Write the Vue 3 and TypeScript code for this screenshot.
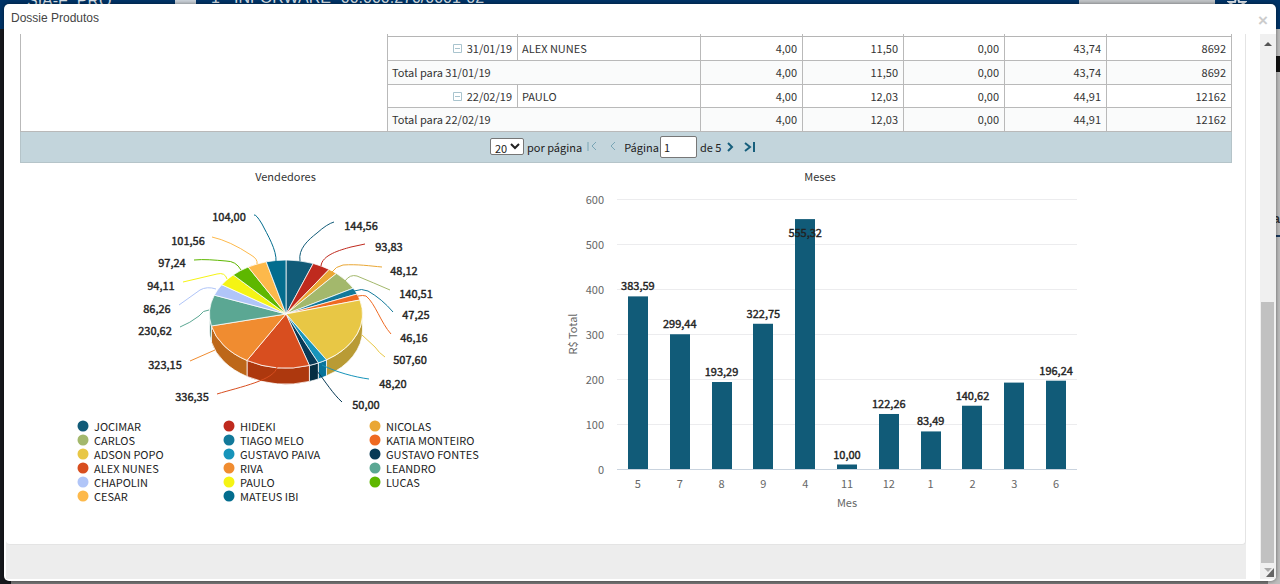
<script setup lang="ts">
import { ref } from 'vue'

interface Row { date: string; name?: string; values: string[] }
const rows: Row[] = [
  { date: '31/01/19', name: 'ALEX NUNES', values: ['4,00', '11,50', '0,00', '43,74', '8692'] },
  { date: '31/01/19', values: ['4,00', '11,50', '0,00', '43,74', '8692'] },
  { date: '22/02/19', name: 'PAULO', values: ['4,00', '12,03', '0,00', '44,91', '12162'] },
  { date: '22/02/19', values: ['4,00', '12,03', '0,00', '44,91', '12162'] },
]
const page = ref('1')
const pageSize = ref('20')

interface Seller {
  name: string; value: number; color: string; side?: string
  lx: number; ly: number; line: string
}
/* Label centres and connector curves use the coordinates of the 480 x 228 pie drawing. */
const sellers: Seller[] = [
  { name: 'JOCIMAR', value: 144.56, color: '#115b78', lx: 300, ly: 39, line: 'M240 74C238 62 248 53 257 46Q267 37 274 35' },
  { name: 'HIDEKI', value: 93.83, color: '#bf2a1e', lx: 328, ly: 60, line: 'M261 79C262 68 280 63 291 60L305 57' },
  { name: 'NICOLAS', value: 48.12, color: '#eaa735', lx: 343, ly: 84, line: 'M271 86Q276 79 283 78C298 77 310 79 322 80' },
  { name: 'CARLOS', value: 140.51, color: '#a3b86c', lx: 355, ly: 107, line: 'M285 94Q290 87 297 89Q314 96 330 103' },
  { name: 'TIAGO MELO', value: 47.25, color: '#12799a', lx: 355, ly: 128, line: 'M294 104Q302 101 308 104Q322 112 333 125' },
  { name: 'KATIA MONTEIRO', value: 46.16, color: '#ef6a22', lx: 353, ly: 151, line: 'M298 109Q303 108 306 109C315 116 321 136 331 147' },
  { name: 'ADSON POPO', value: 507.6, color: '#e8c745', side: '#b99b35', lx: 349, ly: 173, line: 'M302 148L315 160Q319 166 325 170' },
  { name: 'GUSTAVO PAIVA', value: 48.2, color: '#1794ba', side: '#087399', lx: 332, ly: 197, line: 'M262 178C276 185 294 190 309 192' },
  { name: 'GUSTAVO FONTES', value: 50, color: '#083a56', side: '#062f43', lx: 305, ly: 218, line: 'M257 184C265 194 273 207 282 215' },
  { name: 'ALEX NUNES', value: 336.35, color: '#d84e1f', side: '#ad380e', lx: 131, ly: 210, line: 'M217 180C215 193 180 200 157 207' },
  { name: 'RIVA', value: 323.15, color: '#f08c30', side: '#bd6719', lx: 104, ly: 178, line: 'M155 163L130 174' },
  { name: 'LEANDRO', value: 230.62, color: '#5ba793', side: '#407f70', lx: 94, ly: 144, line: 'M149 123Q143 123 139 129Q130 136 120 140' },
  { name: 'CHAPOLIN', value: 86.26, color: '#b0c5f8', lx: 96, ly: 122, line: 'M156 102Q147 99 140 103L119 118' },
  { name: 'PAULO', value: 94.11, color: '#f5f414', lx: 100, ly: 99, line: 'M167 92Q165 85 157 87Q140 91 123 95' },
  { name: 'LUCAS', value: 97.24, color: '#5eb700', lx: 111, ly: 76, line: 'M181 83Q176 74 166 74C154 73 144 72 134 73' },
  { name: 'CESAR', value: 101.56, color: '#fdb94b', lx: 127, ly: 54, line: 'M197 77Q198 72 191 68Q170 54 152 50' },
  { name: 'MATEUS IBI', value: 104, color: '#036d8e', lx: 168, ly: 30, line: 'M216 75C217 63 207 47 202 37Q196 27 194 28' },
]
const fmt = (n: number) => n.toFixed(2).replace('.', ',')
const cx = 226, cy = 127, rx = 76.5, ry = 54, depth = 16
const total = sellers.reduce((s, d) => s + d.value, 0)
const point = (a: number, dy = 0) =>
  `${(cx + rx * Math.sin(a)).toFixed(2)} ${(cy - ry * Math.cos(a) + dy).toFixed(2)}`
let sum = 0
const slices = sellers.map((s) => {
  const a = (sum / total) * 2 * Math.PI
  sum += s.value
  const b = (sum / total) * 2 * Math.PI
  const from = Math.max(a, Math.PI / 2)
  const to = Math.min(b, Math.PI * 1.5)
  return {
    ...s,
    top: `M${cx} ${cy}L${point(a)}A${rx} ${ry} 0 0 1 ${point(b)}Z`,
    wall: from < to
      ? `M${point(from)}A${rx} ${ry} 0 0 1 ${point(to)}L${point(to, depth)}A${rx} ${ry} 0 0 0 ${point(from, depth)}Z`
      : '',
  }
})
const walls = slices.filter((s) => s.wall && s.side)

interface Bar { month: string; value: number; label: string; inside?: boolean }
const bars: Bar[] = [
  { month: '5', value: 383.59, label: '383,59' },
  { month: '7', value: 299.44, label: '299,44' },
  { month: '8', value: 193.29, label: '193,29' },
  { month: '9', value: 322.75, label: '322,75' },
  { month: '4', value: 555.32, label: '555,32', inside: true },
  { month: '11', value: 10, label: '10,00' },
  { month: '12', value: 122.26, label: '122,26' },
  { month: '1', value: 83.49, label: '83,49' },
  { month: '2', value: 140.62, label: '140,62' },
  { month: '3', value: 192, label: '' },
  { month: '6', value: 196.24, label: '196,24' },
]
const ticks = [600, 500, 400, 300, 200, 100, 0]
const barX = (i: number) => 57 + (460 / 11) * (i + 0.5)
const barY = (v: number) => 282 - v * 0.45
</script>

<template>
  <div class="screen">
    <div class="backdrop" aria-hidden="true">
      <div class="topbar">
        <span class="brand">SIA-F: PRO</span>
        <span class="burger"></span>
        <span class="company">1 - INFORWARE -00.000.270/0001-02</span>
        <span class="search"></span>
        <svg class="star" width="20" height="12" viewBox="0 0 20 12"><path d="M10 -6L12 2H18L13 6H7L2 2H8Z" fill="none" stroke="#dce3ea" stroke-width="2" /></svg>
      </div>
      <div class="behind"><div class="side"></div><div class="rest"><i class="black"></i><span class="bit">ra</span></div></div>
    </div>

    <section class="dialog" role="dialog" aria-labelledby="title">
      <header class="head">
        <h1 id="title">Dossie Produtos</h1>
        <button class="close" aria-label="Fechar">×</button>
      </header>
      <div class="body">
        <div class="report">
          <div class="sheet">
            <table>
              <colgroup>
                <col class="c-group"><col class="c-date"><col class="c-name"><col class="c-num"><col class="c-num-s"><col class="c-num-s"><col class="c-num"><col class="c-last">
              </colgroup>
              <tbody>
                <tr v-for="(r, i) in rows" :key="i" :class="r.name ? 'detail' : 'total'">
                  <td v-if="i === 0" :rowspan="rows.length" class="group"></td>
                  <template v-if="r.name">
                    <td class="num">
                      <button class="toggle" aria-label="Recolher">
                        <svg width="9" height="9" viewBox="0 0 9 9"><path d="M.5.5h8v8h-8zM2 4.5h5" fill="none" stroke="#a9c4ce" /></svg>
                      </button>{{ r.date }}
                    </td>
                    <td>{{ r.name }}</td>
                  </template>
                  <td v-else colspan="2">Total para {{ r.date }}</td>
                  <td v-for="(v, j) in r.values" :key="j" class="num">{{ v }}</td>
                </tr>
              </tbody>
            </table>

            <nav class="pager" aria-label="Paginação">
              <select id="size" v-model="pageSize"><option>20</option><option>50</option></select>
              <label for="size" class="per">por página</label>
              <button disabled aria-label="Primeira"><svg width="10" height="10" viewBox="0 0 10 10"><path d="M1 1v9M9 1L5 5l4 4" /></svg></button>
              <button disabled aria-label="Anterior" class="prev"><svg width="10" height="10" viewBox="0 0 10 10"><path d="M8 1L4 5l4 4" /></svg></button>
              <label for="page">Página</label>
              <input id="page" v-model="page" type="text">
              <span class="of">de 5</span>
              <button aria-label="Próxima"><svg width="10" height="10" viewBox="0 0 10 10"><path d="M3 2l4 4-4 4" /></svg></button>
              <button aria-label="Última"><svg width="12" height="10" viewBox="0 0 12 10"><path d="M1 2l5 4-5 4M10 1v10" /></svg></button>
            </nav>

            <div class="charts">
              <figure class="pie">
                <figcaption>Vendedores</figcaption>
                <svg width="480" height="228" viewBox="0 0 480 228" role="img" aria-label="Vendedores">
                  <g stroke="#fff" stroke-opacity=".75" stroke-width="1">
                    <path v-for="s in walls" :key="s.name" :d="s.wall" :fill="s.side" />
                    <path v-for="s in slices" :key="s.name" :d="s.top" :fill="s.color" />
                  </g>
                  <path v-for="s in slices" :key="s.name" :d="s.line" :stroke="s.color" fill="none" />
                  <text v-for="s in slices" :key="s.name" :x="s.lx + 1" :y="s.ly + 4" class="val">{{ fmt(s.value) }}</text>
                </svg>
                <ul class="legend">
                  <li v-for="s in sellers" :key="s.name"><svg width="12" height="12"><circle cx="6" cy="6" r="5.5" :fill="s.color" /></svg>{{ s.name }}</li>
                </ul>
              </figure>
              <figure class="months">
                <figcaption>Meses</figcaption>
                <svg width="540" height="330" viewBox="0 0 540 330" role="img" aria-label="R$ Total por Mes">
                  <g v-for="t in ticks" :key="t">
                    <path :d="`M57 ${Math.round(barY(t)) + 0.5}H517`" :stroke="t ? '#ececee' : '#c9d3de'" />
                    <text x="44" :y="barY(t) + 5" class="tick">{{ t }}</text>
                  </g>
                  <g v-for="(b, i) in bars" :key="b.month">
                    <rect :x="Math.round(barX(i)) - 10" :y="barY(b.value)" width="20" :height="b.value * 0.45" fill="#115b78" />
                    <text :x="barX(i)" :y="barY(b.value) + (b.inside ? 18 : -6)" class="val">{{ b.label }}</text>
                    <text :x="barX(i)" y="301" class="cat">{{ b.month }}</text>
                  </g>
                  <text x="287" y="320" class="cat">Mes</text>
                  <text transform="translate(17 147) rotate(-90)" class="cat">R$ Total</text>
                </svg>
              </figure>
            </div>
          </div>
        </div>
        <div class="scroll" aria-hidden="true">
          <svg width="16" height="18"><path d="M4 12l4-4 4 4z" fill="#555" /></svg>
          <div class="track"><div class="thumb"></div></div>
          <svg width="16" height="16"><path d="M4 5h8l-4 4z" fill="#aaa" /><path d="M14 5v9H6z" fill="#666" /></svg>
        </div>
      </div>
    </section>
  </div>
</template>

<style>
body { overflow: hidden; }
</style>

<style scoped>
* { box-sizing: border-box; }
.screen { position: relative; height: 100vh; overflow: hidden; font-family: "Noto Sans CJK SC", "Noto Sans", sans-serif; font-size: 11px; color: #333; }
.backdrop { position: absolute; inset: 0; display: flex; flex-direction: column; }
.topbar { height: 29px; background: #003468; display: flex; flex: none; color: #dce3ea; font: 16px/16px "Liberation Sans", Arial, sans-serif; }
.topbar span { margin-top: -10px; white-space: pre; }
.topbar .brand { margin: -7px 0 0 27px; width: 148px; }
.topbar .burger { width: 21px; height: 4px; background: #ccd3da; margin: 0 15px 0 0; }
.topbar .search { margin: 0 12px 0 auto; width: 136px; height: 12px; background: #c4c7ca; }
.topbar .star { margin-right: 33px; }
.behind { flex: 1; display: flex; justify-content: space-between; background: #777; }
.side { width: 11px; background: #17191d; }
.rest { width: 12px; background: #bebebe; display: flex; flex-direction: column; }
.black { height: 16px; margin-top: 27px; background: #111; }
.bit { margin-top: 136px; height: 29px; border-bottom: 2px solid #17375e; font: bold 12px/22px "Liberation Sans", sans-serif; text-align: right; }
.dialog { position: absolute; inset: 4px 4px 3px 4px; background: #fff; border-radius: 5px; display: flex; flex-direction: column; overflow: hidden; box-shadow: 0 0 4px rgba(0, 0, 0, .5); }
.head { height: 30px; flex: none; display: flex; justify-content: space-between; padding: 0 8px 0 7px; font-family: "Liberation Sans", Arial, sans-serif; }
h1 { margin: 0; font-size: 12px; line-height: 29px; font-weight: 400; color: #444; }
.close { border: 0; background: none; padding: 0; font: bold 17px/34px "Liberation Sans", Arial, sans-serif; color: #ccc; }
.body { flex: 1; display: flex; min-height: 0; padding: 0 0 2px 2px; }
.report { flex: 1; background: #ededed; margin-right: 14px; }
.sheet { height: 511px; padding: 0 13px 0 14px; background: #fff; border: solid #e4e4e4; border-width: 0 1px 1px 0; border-radius: 0 0 4px 4px; }
table { width: 100%; border-collapse: collapse; table-layout: fixed; }
.c-group { width: 367px; }
.c-date { width: 130px; }
.c-name { width: 183px; }
.c-num { width: 102px; }
.c-num-s { width: 101px; }
tr.detail { height: 23px; }
tr.total { height: 24px; background: #fafbfb; }
tr:first-child { height: 26px; }
tr:first-child td:not(.group) { box-shadow: inset 0 2px 0 #fff, inset 0 3px 0 #b5b5b5; padding-top: 3px; }
td { border: 1px solid #b9b9b9; padding: 0 5px 0 4px; line-height: 20px; color: #333; white-space: nowrap; }
tr:first-child td { border-top: 0; }
.group { background: #fff; }
.num { text-align: right; }
.toggle { border: 0; background: none; padding: 0; margin-right: 5px; line-height: 9px; }
.pager { height: 31px; background: #c3d5dc; border: 1px solid #b5c4c9; border-top: 0; display: flex; align-items: center; padding-left: 469px; color: #222; }
.pager select { width: 34px; height: 17px; border: 1px solid #767676; border-radius: 2px; background: #fff; padding: 0; font: inherit; line-height: 14px; color: #222; }
.per { margin: 0 4px 0 3px; }
.pager button { border: 0; padding: 0; background: none; width: 12px; height: 12px; line-height: 10px; margin-right: 8px; }
.pager button.prev { margin-right: 6px; }
.pager svg { fill: none; stroke: #175f7c; stroke-width: 2; overflow: visible; }
.pager button:disabled svg { stroke: #79a5b5; }
.pager button:disabled path { stroke-width: 1; }
.pager input { width: 37px; height: 22px; border: 1px solid #777; border-radius: 2px; padding: 0 3px; font: inherit; color: #222; margin: 0 3px 0 1px; }
.of { margin-right: 3px; }
.charts { display: flex; }
figure { margin: 0; }
.pie { width: 540px; }
.months { width: 540px; }
figcaption { line-height: 16px; padding-top: 5px; height: 24px; text-align: center; }
.pie figcaption { width: 531px; }
.months figcaption { width: 520px; }
figure svg { display: block; }
.pie > svg { margin-left: 40px; }
.val { font-size: 11px; font-weight: 400; text-anchor: middle; fill: #222; stroke: #222; stroke-width: .4px; }
.tick { font-size: 11px; text-anchor: end; fill: #666; }
.cat { font-size: 11px; text-anchor: middle; fill: #666; }
.legend { list-style: none; margin: 4px 0 0 57px; padding: 0; width: 438px; display: grid; grid-template-columns: repeat(3, 1fr); font-size: 11px; line-height: 14px; color: #222; }
.legend li { display: flex; align-items: center; gap: 5px; height: 14px; }
.scroll { width: 16px; background: #f0f0f0; display: flex; flex-direction: column; }
.track { flex: 1; display: flex; flex-direction: column; justify-content: flex-end; }
.thumb { height: 51%; margin: 0 2px 0 1px; background: #c1c1c1; }
</style>
